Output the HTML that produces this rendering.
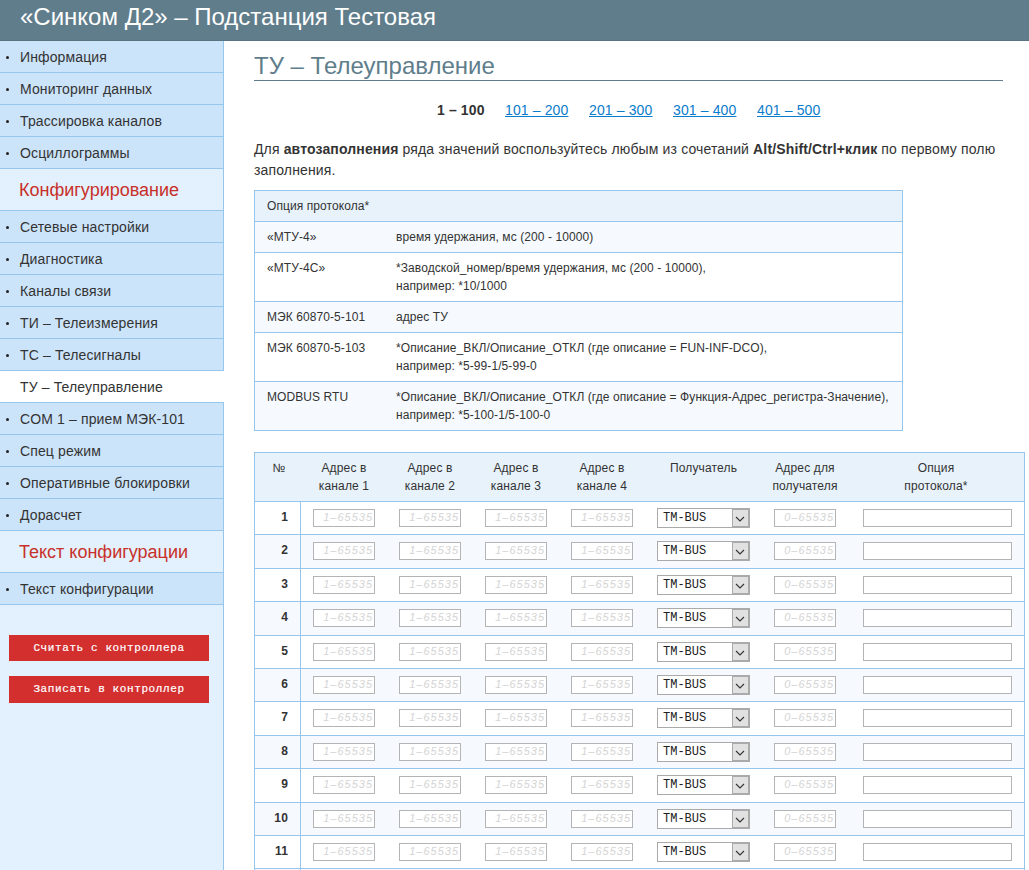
<!DOCTYPE html><html><head><meta charset="utf-8"><style>
*{box-sizing:border-box;margin:0;padding:0}
html,body{width:1029px;height:870px;overflow:hidden;background:#fff}
body{font-family:"Liberation Sans",sans-serif;color:#333333;position:relative}
.abs{position:absolute}
#hdr{left:0;top:0;width:1029px;height:41px;background:#607d8b;border-bottom:1px solid #587480}
#hdr span{position:absolute;left:20px;top:0;font-size:24px;line-height:33px;color:#fff;white-space:nowrap}
#side{left:0;top:41px;width:224px;height:829px;background:#e3f0fd;border-right:1px solid #96c6ec}
.it{position:absolute;left:0;width:223px;height:32px;background:#cce4fa;border-bottom:1px solid #96c6ec;font-size:14px;line-height:31px;padding-top:1px;padding-left:20px;letter-spacing:0.13px;white-space:nowrap}
.it i{position:absolute;left:6px;top:15px;width:3px;height:3px;border-radius:50%;background:#222}
.it.act{background:#fff;width:224px}
.sec{position:absolute;left:0;width:223px;height:42px;background:#e3f0fd;border-bottom:1px solid #96c6ec;font-size:18px;line-height:41px;padding-top:1px;padding-left:19px;color:#c8302a;white-space:nowrap}
.btn{position:absolute;left:9px;width:200px;background:#d32f2f;color:#fff;font-family:"Liberation Mono",monospace;font-size:11px;-webkit-text-stroke:0.2px #fff;letter-spacing:0.6px;text-align:center;white-space:pre}
#title{left:254px;top:52px;font-size:24px;line-height:28px;color:#607d8b;white-space:nowrap}
#tline{left:254px;top:80px;width:749px;height:1px;background:#607d8b}
.pg{position:absolute;top:100px;font-size:14px;line-height:20px;white-space:nowrap;letter-spacing:0.13px}
.pg a{color:#0a7ccc;text-decoration:underline}
#para{left:254px;top:139px;width:760px;font-size:14px;line-height:21px;letter-spacing:0.14px;white-space:nowrap}
#info{left:254px;top:190px;width:649px;border:1px solid #96c6ec;font-size:12px;line-height:18px;letter-spacing:0.08px}
.ir{position:relative;border-bottom:1px solid #96c6ec;padding:6px 0;white-space:nowrap}
.ir:last-child{border-bottom:none}
.ir .c1{position:absolute;left:12px;top:6px}
.ir .c2{margin-left:141px}
.hd{background:#e8f2fb}
.odd{background:#f6fafe}
#mt{left:254px;top:452px;width:771px;height:430px;border:1px solid #96c6ec;border-bottom:none;font-size:12px;line-height:18px;letter-spacing:0.15px}
.mh{position:absolute;left:0;top:0;width:769px;height:48px;background:#e8f2fb}
.mh div{position:absolute;top:6px;text-align:center;white-space:nowrap}
.row{position:absolute;left:0;width:769px;border-top:1px solid #96c6ec}
.num{position:absolute;left:0;width:46px;height:100%;border-right:1px solid #96c6ec;text-align:right;padding-right:12px;font-weight:bold;white-space:nowrap}
.inp{position:absolute;width:62px;height:18px;border:1px solid #b4b4b4;background:#fff;font-family:"Liberation Sans",sans-serif;font-style:italic;font-size:11px;line-height:14px;color:#d4d4d4;text-align:right;padding-right:1px;letter-spacing:1px}
.sel{position:absolute;width:93px;height:20px;border:1px solid #aaa;background:#fff;font-family:"Liberation Mono",monospace;font-size:12px;line-height:18px;color:#222;padding-left:5px;letter-spacing:0}
.sel b{position:absolute;left:74px;top:0;width:17px;height:18px;background:#e1e1e1;border:1px solid #aaa;}
.sel b svg{position:absolute;left:0;top:0}
.opt{position:absolute;width:149px;height:18px;border:1px solid #b4b4b4;background:#fff}
</style></head><body>
<div id="hdr" class="abs"><span>«Синком Д2» – Подстанция Тестовая</span></div>
<div id="side" class="abs">
<div class="it" style="top:0px"><i></i>Информация</div>
<div class="it" style="top:32px"><i></i>Мониторинг данных</div>
<div class="it" style="top:64px"><i></i>Трассировка каналов</div>
<div class="it" style="top:96px"><i></i>Осциллограммы</div>
<div class="sec" style="top:128px">Конфигурирование</div>
<div class="it" style="top:170px"><i></i>Сетевые настройки</div>
<div class="it" style="top:202px"><i></i>Диагностика</div>
<div class="it" style="top:234px"><i></i>Каналы связи</div>
<div class="it" style="top:266px"><i></i>ТИ – Телеизмерения</div>
<div class="it" style="top:298px"><i></i>ТС – Телесигналы</div>
<div class="it act" style="top:330px">ТУ – Телеуправление</div>
<div class="it" style="top:362px"><i></i>COM 1 – прием МЭК-101</div>
<div class="it" style="top:394px"><i></i>Спец режим</div>
<div class="it" style="top:426px"><i></i>Оперативные блокировки</div>
<div class="it" style="top:458px"><i></i>Дорасчет</div>
<div class="sec" style="top:490px">Текст конфигурации</div>
<div class="it" style="top:532px"><i></i>Текст конфигурации</div>
<div class="btn" style="top:594px;height:26px;line-height:26px">Считать с контроллера</div>
<div class="btn" style="top:635px;height:27px;line-height:27px">Записать в контроллер</div>
</div>
<div id="title" class="abs">ТУ – Телеуправление</div>
<div id="tline" class="abs"></div>
<div class="pg" style="left:437px"><b>1 – 100</b></div>
<div class="pg" style="left:505px"><a>101 – 200</a></div>
<div class="pg" style="left:589px"><a>201 – 300</a></div>
<div class="pg" style="left:673px"><a>301 – 400</a></div>
<div class="pg" style="left:757px"><a>401 – 500</a></div>
<div id="para" class="abs">Для <b>автозаполнения</b> ряда значений воспользуйтесь любым из сочетаний <b>Alt/Shift/Ctrl+клик</b> по первому полю<br>заполнения.</div>
<div id="info" class="abs">
<div class="ir hd"><span class="c1">Опция протокола*</span><div class="c2">&nbsp;</div></div>
<div class="ir odd"><span class="c1">«МТУ-4»</span><div class="c2">время удержания, мс (200 - 10000)</div></div>
<div class="ir "><span class="c1">«МТУ-4С»</span><div class="c2">*Заводской_номер/время удержания, мс (200 - 10000),<br>например: *10/1000</div></div>
<div class="ir odd"><span class="c1">МЭК 60870-5-101</span><div class="c2">адрес ТУ</div></div>
<div class="ir "><span class="c1">МЭК 60870-5-103</span><div class="c2">*Описание_ВКЛ/Описание_ОТКЛ (где описание = FUN-INF-DCO),<br>например: *5-99-1/5-99-0</div></div>
<div class="ir odd"><span class="c1">MODBUS RTU</span><div class="c2">*Описание_ВКЛ/Описание_ОТКЛ (где описание = Функция-Адрес_регистра-Значение),<br>например: *5-100-1/5-100-0</div></div>
</div>
<div id="mt" class="abs">
<div class="mh">
<div style="left:1px;width:46px">№</div>
<div style="left:46px;width:86px">Адрес в<br>канале 1</div>
<div style="left:132px;width:86px">Адрес в<br>канале 2</div>
<div style="left:218px;width:86px">Адрес в<br>канале 3</div>
<div style="left:304px;width:86px">Адрес в<br>канале 4</div>
<div style="left:390px;width:117px">Получатель</div>
<div style="left:507px;width:86px">Адрес для<br>получателя</div>
<div style="left:593px;width:176px">Опция<br>протокола*</div>
</div>
<div class="row" style="top:48px;height:34px;background:#fff">
<div class="num" style="line-height:30px">1</div>
<div class="inp" style="left:58px;top:7px">1–65535</div>
<div class="inp" style="left:144px;top:7px">1–65535</div>
<div class="inp" style="left:230px;top:7px">1–65535</div>
<div class="inp" style="left:316px;top:7px">1–65535</div>
<div class="sel" style="left:402px;top:6px">TM-BUS<b><svg width="15" height="16" viewBox="0 0 15 16"><path d="M3 7 L7 11 L11 7" fill="none" stroke="#333" stroke-width="1.1"/></svg></b></div>
<div class="inp" style="left:519px;top:7px">0–65535</div>
<div class="opt" style="left:608px;top:7px"></div>
</div>
<div class="row" style="top:81px;height:35px;background:#f6fafe">
<div class="num" style="line-height:31px">2</div>
<div class="inp" style="left:58px;top:7px">1–65535</div>
<div class="inp" style="left:144px;top:7px">1–65535</div>
<div class="inp" style="left:230px;top:7px">1–65535</div>
<div class="inp" style="left:316px;top:7px">1–65535</div>
<div class="sel" style="left:402px;top:6px">TM-BUS<b><svg width="15" height="16" viewBox="0 0 15 16"><path d="M3 7 L7 11 L11 7" fill="none" stroke="#333" stroke-width="1.1"/></svg></b></div>
<div class="inp" style="left:519px;top:7px">0–65535</div>
<div class="opt" style="left:608px;top:7px"></div>
</div>
<div class="row" style="top:115px;height:34px;background:#fff">
<div class="num" style="line-height:30px">3</div>
<div class="inp" style="left:58px;top:7px">1–65535</div>
<div class="inp" style="left:144px;top:7px">1–65535</div>
<div class="inp" style="left:230px;top:7px">1–65535</div>
<div class="inp" style="left:316px;top:7px">1–65535</div>
<div class="sel" style="left:402px;top:6px">TM-BUS<b><svg width="15" height="16" viewBox="0 0 15 16"><path d="M3 7 L7 11 L11 7" fill="none" stroke="#333" stroke-width="1.1"/></svg></b></div>
<div class="inp" style="left:519px;top:7px">0–65535</div>
<div class="opt" style="left:608px;top:7px"></div>
</div>
<div class="row" style="top:148px;height:35px;background:#f6fafe">
<div class="num" style="line-height:31px">4</div>
<div class="inp" style="left:58px;top:7px">1–65535</div>
<div class="inp" style="left:144px;top:7px">1–65535</div>
<div class="inp" style="left:230px;top:7px">1–65535</div>
<div class="inp" style="left:316px;top:7px">1–65535</div>
<div class="sel" style="left:402px;top:6px">TM-BUS<b><svg width="15" height="16" viewBox="0 0 15 16"><path d="M3 7 L7 11 L11 7" fill="none" stroke="#333" stroke-width="1.1"/></svg></b></div>
<div class="inp" style="left:519px;top:7px">0–65535</div>
<div class="opt" style="left:608px;top:7px"></div>
</div>
<div class="row" style="top:182px;height:34px;background:#fff">
<div class="num" style="line-height:30px">5</div>
<div class="inp" style="left:58px;top:7px">1–65535</div>
<div class="inp" style="left:144px;top:7px">1–65535</div>
<div class="inp" style="left:230px;top:7px">1–65535</div>
<div class="inp" style="left:316px;top:7px">1–65535</div>
<div class="sel" style="left:402px;top:6px">TM-BUS<b><svg width="15" height="16" viewBox="0 0 15 16"><path d="M3 7 L7 11 L11 7" fill="none" stroke="#333" stroke-width="1.1"/></svg></b></div>
<div class="inp" style="left:519px;top:7px">0–65535</div>
<div class="opt" style="left:608px;top:7px"></div>
</div>
<div class="row" style="top:215px;height:34px;background:#f6fafe">
<div class="num" style="line-height:30px">6</div>
<div class="inp" style="left:58px;top:7px">1–65535</div>
<div class="inp" style="left:144px;top:7px">1–65535</div>
<div class="inp" style="left:230px;top:7px">1–65535</div>
<div class="inp" style="left:316px;top:7px">1–65535</div>
<div class="sel" style="left:402px;top:6px">TM-BUS<b><svg width="15" height="16" viewBox="0 0 15 16"><path d="M3 7 L7 11 L11 7" fill="none" stroke="#333" stroke-width="1.1"/></svg></b></div>
<div class="inp" style="left:519px;top:7px">0–65535</div>
<div class="opt" style="left:608px;top:7px"></div>
</div>
<div class="row" style="top:248px;height:35px;background:#fff">
<div class="num" style="line-height:31px">7</div>
<div class="inp" style="left:58px;top:7px">1–65535</div>
<div class="inp" style="left:144px;top:7px">1–65535</div>
<div class="inp" style="left:230px;top:7px">1–65535</div>
<div class="inp" style="left:316px;top:7px">1–65535</div>
<div class="sel" style="left:402px;top:6px">TM-BUS<b><svg width="15" height="16" viewBox="0 0 15 16"><path d="M3 7 L7 11 L11 7" fill="none" stroke="#333" stroke-width="1.1"/></svg></b></div>
<div class="inp" style="left:519px;top:7px">0–65535</div>
<div class="opt" style="left:608px;top:7px"></div>
</div>
<div class="row" style="top:282px;height:34px;background:#f6fafe">
<div class="num" style="line-height:30px">8</div>
<div class="inp" style="left:58px;top:7px">1–65535</div>
<div class="inp" style="left:144px;top:7px">1–65535</div>
<div class="inp" style="left:230px;top:7px">1–65535</div>
<div class="inp" style="left:316px;top:7px">1–65535</div>
<div class="sel" style="left:402px;top:6px">TM-BUS<b><svg width="15" height="16" viewBox="0 0 15 16"><path d="M3 7 L7 11 L11 7" fill="none" stroke="#333" stroke-width="1.1"/></svg></b></div>
<div class="inp" style="left:519px;top:7px">0–65535</div>
<div class="opt" style="left:608px;top:7px"></div>
</div>
<div class="row" style="top:315px;height:35px;background:#fff">
<div class="num" style="line-height:31px">9</div>
<div class="inp" style="left:58px;top:7px">1–65535</div>
<div class="inp" style="left:144px;top:7px">1–65535</div>
<div class="inp" style="left:230px;top:7px">1–65535</div>
<div class="inp" style="left:316px;top:7px">1–65535</div>
<div class="sel" style="left:402px;top:6px">TM-BUS<b><svg width="15" height="16" viewBox="0 0 15 16"><path d="M3 7 L7 11 L11 7" fill="none" stroke="#333" stroke-width="1.1"/></svg></b></div>
<div class="inp" style="left:519px;top:7px">0–65535</div>
<div class="opt" style="left:608px;top:7px"></div>
</div>
<div class="row" style="top:349px;height:34px;background:#f6fafe">
<div class="num" style="line-height:30px">10</div>
<div class="inp" style="left:58px;top:7px">1–65535</div>
<div class="inp" style="left:144px;top:7px">1–65535</div>
<div class="inp" style="left:230px;top:7px">1–65535</div>
<div class="inp" style="left:316px;top:7px">1–65535</div>
<div class="sel" style="left:402px;top:6px">TM-BUS<b><svg width="15" height="16" viewBox="0 0 15 16"><path d="M3 7 L7 11 L11 7" fill="none" stroke="#333" stroke-width="1.1"/></svg></b></div>
<div class="inp" style="left:519px;top:7px">0–65535</div>
<div class="opt" style="left:608px;top:7px"></div>
</div>
<div class="row" style="top:382px;height:34px;background:#fff">
<div class="num" style="line-height:30px">11</div>
<div class="inp" style="left:58px;top:7px">1–65535</div>
<div class="inp" style="left:144px;top:7px">1–65535</div>
<div class="inp" style="left:230px;top:7px">1–65535</div>
<div class="inp" style="left:316px;top:7px">1–65535</div>
<div class="sel" style="left:402px;top:6px">TM-BUS<b><svg width="15" height="16" viewBox="0 0 15 16"><path d="M3 7 L7 11 L11 7" fill="none" stroke="#333" stroke-width="1.1"/></svg></b></div>
<div class="inp" style="left:519px;top:7px">0–65535</div>
<div class="opt" style="left:608px;top:7px"></div>
</div>
<div class="row" style="top:415px;height:35px;background:#f6fafe">
<div class="num" style="line-height:31px">12</div>
<div class="inp" style="left:58px;top:7px">1–65535</div>
<div class="inp" style="left:144px;top:7px">1–65535</div>
<div class="inp" style="left:230px;top:7px">1–65535</div>
<div class="inp" style="left:316px;top:7px">1–65535</div>
<div class="sel" style="left:402px;top:6px">TM-BUS<b><svg width="15" height="16" viewBox="0 0 15 16"><path d="M3 7 L7 11 L11 7" fill="none" stroke="#333" stroke-width="1.1"/></svg></b></div>
<div class="inp" style="left:519px;top:7px">0–65535</div>
<div class="opt" style="left:608px;top:7px"></div>
</div>
</div>
</body></html>
